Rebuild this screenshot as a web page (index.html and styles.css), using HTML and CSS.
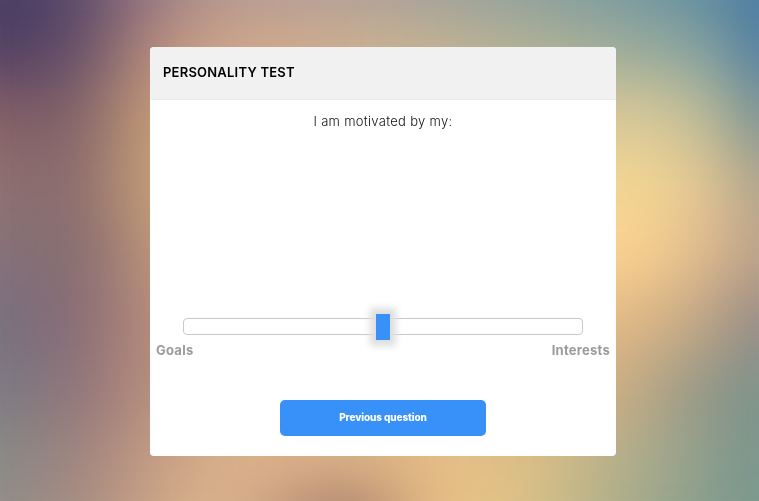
FILE: index.html
```
<!DOCTYPE html>
<html lang="en">
  <head>
    <meta charset="UTF-8" />
    <title>Personality Test</title>
    <meta name="viewport" content="width=device-width, initial-scale=1.0" />
    <link rel="stylesheet" href="styles.css">
  </head>
  <body>
    <div class="container">
      <div class="header">
        <h2>Personality Test</h2>
      </div>
      <form id="form" class="form">
        <label class="question" for="answer">I am motivated by my:</label>
        <input type="range" id="answer" class="slider" min="0" max="100" value="50">
        <div class="slider-labels">
          <span>Goals</span>
          <span>Interests</span>
        </div>
        <button type="button">Previous question</button>
      </form>
    </div>
  </body>
</html>
```
FILE: styles.css
```
:root {
  --main-color: #3890f9;
}
* {
  box-sizing: border-box;
  font-family: 'Inter', sans-serif;
}
body {
  display: flex;
  justify-content: center;
  align-items: flex-start;
  min-height: 100vh;
  margin: 0;
  padding: 47px 0 0 7px;
  overflow: hidden;
}
/* blurred background, one colour band per row */
body:before {
  content: "";
  position: fixed;
  top: -60px;
  left: -60px;
  right: -60px;
  bottom: -60px;
  z-index: -1;
  filter: blur(29px);
  background-repeat: no-repeat;
  background-size: 100% 70px;
  background-position: 0 0, 0 69px, 0 138px, 0 207px, 0 276px, 0 345px, 0 414px, 0 483px, 0 552px;
  background-image:
    linear-gradient(90deg, #453a64 60px, #4c4064 110px, #665470 160px, #8c7080 205px, #ae938f 275px, #b29c9a 370px, #a59d9a 460px, #8c9e9c 580px, #7398a0 680px, #5c8aa0 760px, #487aa0 815px),
    linear-gradient(90deg, #503f62 60px, #564467 110px, #785c6c 160px, #b0857c 205px, #cda48a 275px, #cdab8f 370px, #c5b193 460px, #afb097 580px, #9aaa9a 680px, #88a49f 750px, #7497a0 785px, #4f7da2 815px),
    linear-gradient(90deg, #855f66 60px, #785b67 110px, #91706e 160px, #c69b76 205px, #d3b083 370px, #d0be92 580px, #d9c898 680px, #c8c298 750px, #a8b095 785px, #789094 815px),
    linear-gradient(90deg, #927270 60px, #87696c 110px, #98766f 160px, #c8a177 205px, #d3b083 370px, #ecce90 580px, #f6d893 680px, #e8cc94 750px, #d4bc92 785px, #aba28c 815px),
    linear-gradient(90deg, #86717a 60px, #836e73 110px, #8f6f70 160px, #be957a 205px, #d3b083 370px, #f5cd90 580px, #fdd590 680px, #e8c28e 750px, #d4af8c 785px, #baa288 815px),
    linear-gradient(90deg, #777080 60px, #806a76 110px, #937277 160px, #b58a7c 205px, #d3b083 370px, #e8be88 580px, #e4ba86 680px, #c8ac86 750px, #b09a84 785px, #958a88 815px),
    linear-gradient(90deg, #7a7b82 60px, #87747d 110px, #997878 160px, #b68e7e 205px, #d3b083 370px, #d8b484 580px, #ccae84 680px, #9c9a86 750px, #8a9488 785px, #7d938c 815px),
    linear-gradient(90deg, #8a8b88 60px, #958380 110px, #aa8880 160px, #c29a84 205px, #dcb48c 290px, #dab08a 370px, #d9b286 430px, #e8bf86 500px, #dcc086 590px, #b9b08b 670px, #96a28c 750px, #86998c 785px, #7a958c 815px),
    linear-gradient(90deg, #908e88 60px, #a08d84 110px, #b39482 160px, #caa385 205px, #dfb78c 275px, #bc9178 350px, #996f62 405px, #cda27a 460px, #efc686 520px, #d6c085 590px, #b0b08a 670px, #8ba08c 750px, #76978c 819px);
}
.container {
  background: #fff;
  border-radius: 4px;
  width: 466px;
  height: 409px;
  overflow: hidden;
}
.header {
  background: #f1f1f1;
  border-bottom: 1px solid #ececec;
  height: 53px;
  padding: 17px 13px;
}
h2 {
  margin: 0;
  color: #000;
  font-size: 13px;
  font-weight: 600;
  line-height: 17px;
  letter-spacing: 0.22px;
  text-transform: uppercase;
}
.form {
  display: flex;
  flex-direction: column;
  align-items: center;
  padding: 12px 6px 0;
}
.question {
  height: 206px;
  color: #111;
  font-size: 13px;
  font-weight: 300;
  line-height: 18px;
  letter-spacing: 0.3px;
}
.slider {
  -webkit-appearance: none;
  appearance: none;
  width: 400px;
  height: 17px;
  margin: 0;
  background: #fff;
  border: 1px solid #c8c8c8;
  border-radius: 4px;
}
.slider:focus {
  outline: 0;
}
.slider::-webkit-slider-thumb {
  -webkit-appearance: none;
  width: 14px;
  height: 26px;
  background: var(--main-color);
  box-shadow: 0 0 7px 6px #dedede;
  cursor: pointer;
}
.slider-labels {
  display: flex;
  justify-content: space-between;
  width: 100%;
  margin-top: 7px;
  color: #9b9b9b;
  font-size: 13px;
  font-weight: 700;
  line-height: 17px;
  letter-spacing: 0.25px;
}
button {
  width: 206px;
  height: 36px;
  margin-top: 41px;
  padding: 0 0 2px;
  background: var(--main-color);
  border: 0;
  border-radius: 5px;
  color: #fff;
  font-size: 10px;
  font-weight: 800;
  letter-spacing: -0.1px;
  cursor: pointer;
}
```
